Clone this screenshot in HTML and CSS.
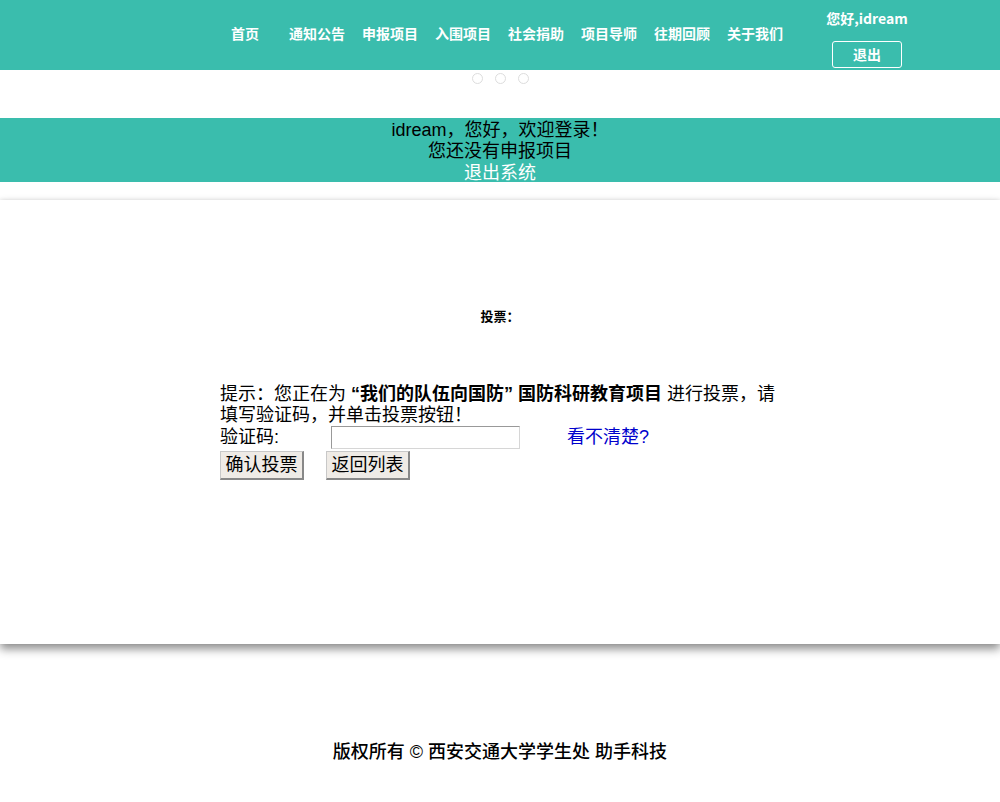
FILE: index.html
```html
<!DOCTYPE html>
<html lang="zh">
<head>
<meta charset="utf-8">
<title>投票</title>
<link rel="stylesheet" href="styles.css">
</head>
<body>
<header class="topbar">
  <nav class="nav">
    <a class="nav-item nav-home" href="#">首页</a>
    <a class="nav-item" href="#">通知公告</a>
    <a class="nav-item" href="#">申报项目</a>
    <a class="nav-item" href="#">入围项目</a>
    <a class="nav-item" href="#">社会捐助</a>
    <a class="nav-item" href="#">项目导师</a>
    <a class="nav-item" href="#">往期回顾</a>
    <a class="nav-item" href="#">关于我们</a>
  </nav>
  <div class="user">
    <div class="user-name">您好,idream</div>
    <a class="logout-btn" href="#">退出</a>
  </div>
</header>

<div class="slider">
  <span class="dot"></span><span class="dot"></span><span class="dot"></span>
</div>

<section class="welcome">
  <div>idream，您好，欢迎登录！</div>
  <div>您还没有申报项目</div>
  <a class="exit" href="#">退出系统</a>
</section>

<main class="card">
  <h3 class="vote-title">投票：</h3>
  <div class="vote-box">
    <p class="hint">提示：您正在为 <b>“我们的队伍向国防” 国防科研教育项目</b> 进行投票，请填写验证码，并单击投票按钮！</p>
    <div class="code-row">
      <span class="code-label">验证码:</span>
      <input class="code-input" type="text">
      <a class="code-link" href="#">看不清楚?</a>
    </div>
    <div class="btn-row">
      <button class="btn">确认投票</button>
      <button class="btn">返回列表</button>
    </div>
  </div>
</main>

<footer class="footer">版权所有 © 西安交通大学学生处 助手科技</footer>
</body>
</html>
```

FILE: styles.css
```css
* { box-sizing: border-box; }
body {
  margin: 0;
  font-family: "Liberation Sans", "Noto Sans CJK SC", sans-serif;
  background: #fff;
  color: #000;
}
a { text-decoration: none; }

.topbar {
  height: 70px;
  background: #3abdad;
  display: flex;
  align-items: flex-start;
  padding-left: 231px;
}
.nav {
  display: flex;
  gap: 17px;
  margin-top: 23px;
}
.nav-item {
  color: #fff;
  font-family: "Noto Sans CJK SC", sans-serif;
  font-size: 14px;
  font-weight: bold;
  line-height: 20px;
  width: 56px;
  white-space: nowrap;
}
.nav-home { width: 41px; }
.user {
  margin-left: 44px;
  width: 80px;
  display: flex;
  flex-direction: column;
  align-items: center;
  padding-top: 8px;
}
.user-name {
  color: #fff;
  font-family: "Noto Sans CJK SC", sans-serif;
  font-size: 14px;
  font-weight: bold;
  line-height: 20px;
  white-space: nowrap;
}
.logout-btn {
  margin-top: 13px;
  width: 70px;
  height: 27px;
  border: 1px solid #fff;
  border-radius: 3px;
  color: #fff;
  font-family: "Noto Sans CJK SC", sans-serif;
  font-size: 14px;
  font-weight: bold;
  line-height: 25px;
  text-align: center;
}

.slider {
  height: 48px;
  display: flex;
  justify-content: center;
  gap: 12px;
  padding-top: 3px;
}
.dot {
  width: 11px;
  height: 11px;
  border: 1px solid #ddd;
  border-radius: 50%;
}

.welcome {
  background: #3abdad;
  text-align: center;
  font-size: 18px;
  line-height: 21px;
  padding: 2px 0 0;
  height: 64px;
}
.welcome .exit { color: #fff; display: block; margin-top: 1px; }

.card {
  margin-top: 18px;
  height: 444px;
  background: #fff;
  box-shadow: 0 -1px 3px rgba(0,0,0,0.06), 0 5px 9px rgba(0,0,0,0.45);
  padding-top: 108px;
}
.vote-title {
  margin: 0;
  text-align: center;
  font-size: 13px;
  font-weight: bold;
  line-height: 18px;
}
.vote-box {
  width: 560px;
  margin: 58px 0 0 220px;
  font-size: 18px;
  line-height: 21px;
}
.hint { margin: 0; }
.code-row {
  display: flex;
  align-items: center;
  height: 23px;
}
.code-label { width: 111px; }
.code-input {
  width: 189px;
  height: 23px;
  border: 1px solid #d6d6d6;
  border-top-color: #999;
  border-left-color: #999;
  padding: 0;
}
.code-link {
  margin-left: 47px;
  color: #0000cc;
}
.btn-row {
  display: flex;
  gap: 22px;
  margin-top: 2px;
}
.btn {
  font-family: inherit;
  font-size: 18px;
  line-height: 22px;
  height: 29px;
  width: 84px;
  padding: 0;
  background: #efebe6;
  border: 1px solid #c8c8c8;
  border-right: 2px solid #888;
  border-bottom: 2px solid #888;
  color: #000;
}

.footer {
  text-align: center;
  font-size: 18px;
  font-weight: 500;
  margin-top: 96px;
  line-height: 24px;
}
```
